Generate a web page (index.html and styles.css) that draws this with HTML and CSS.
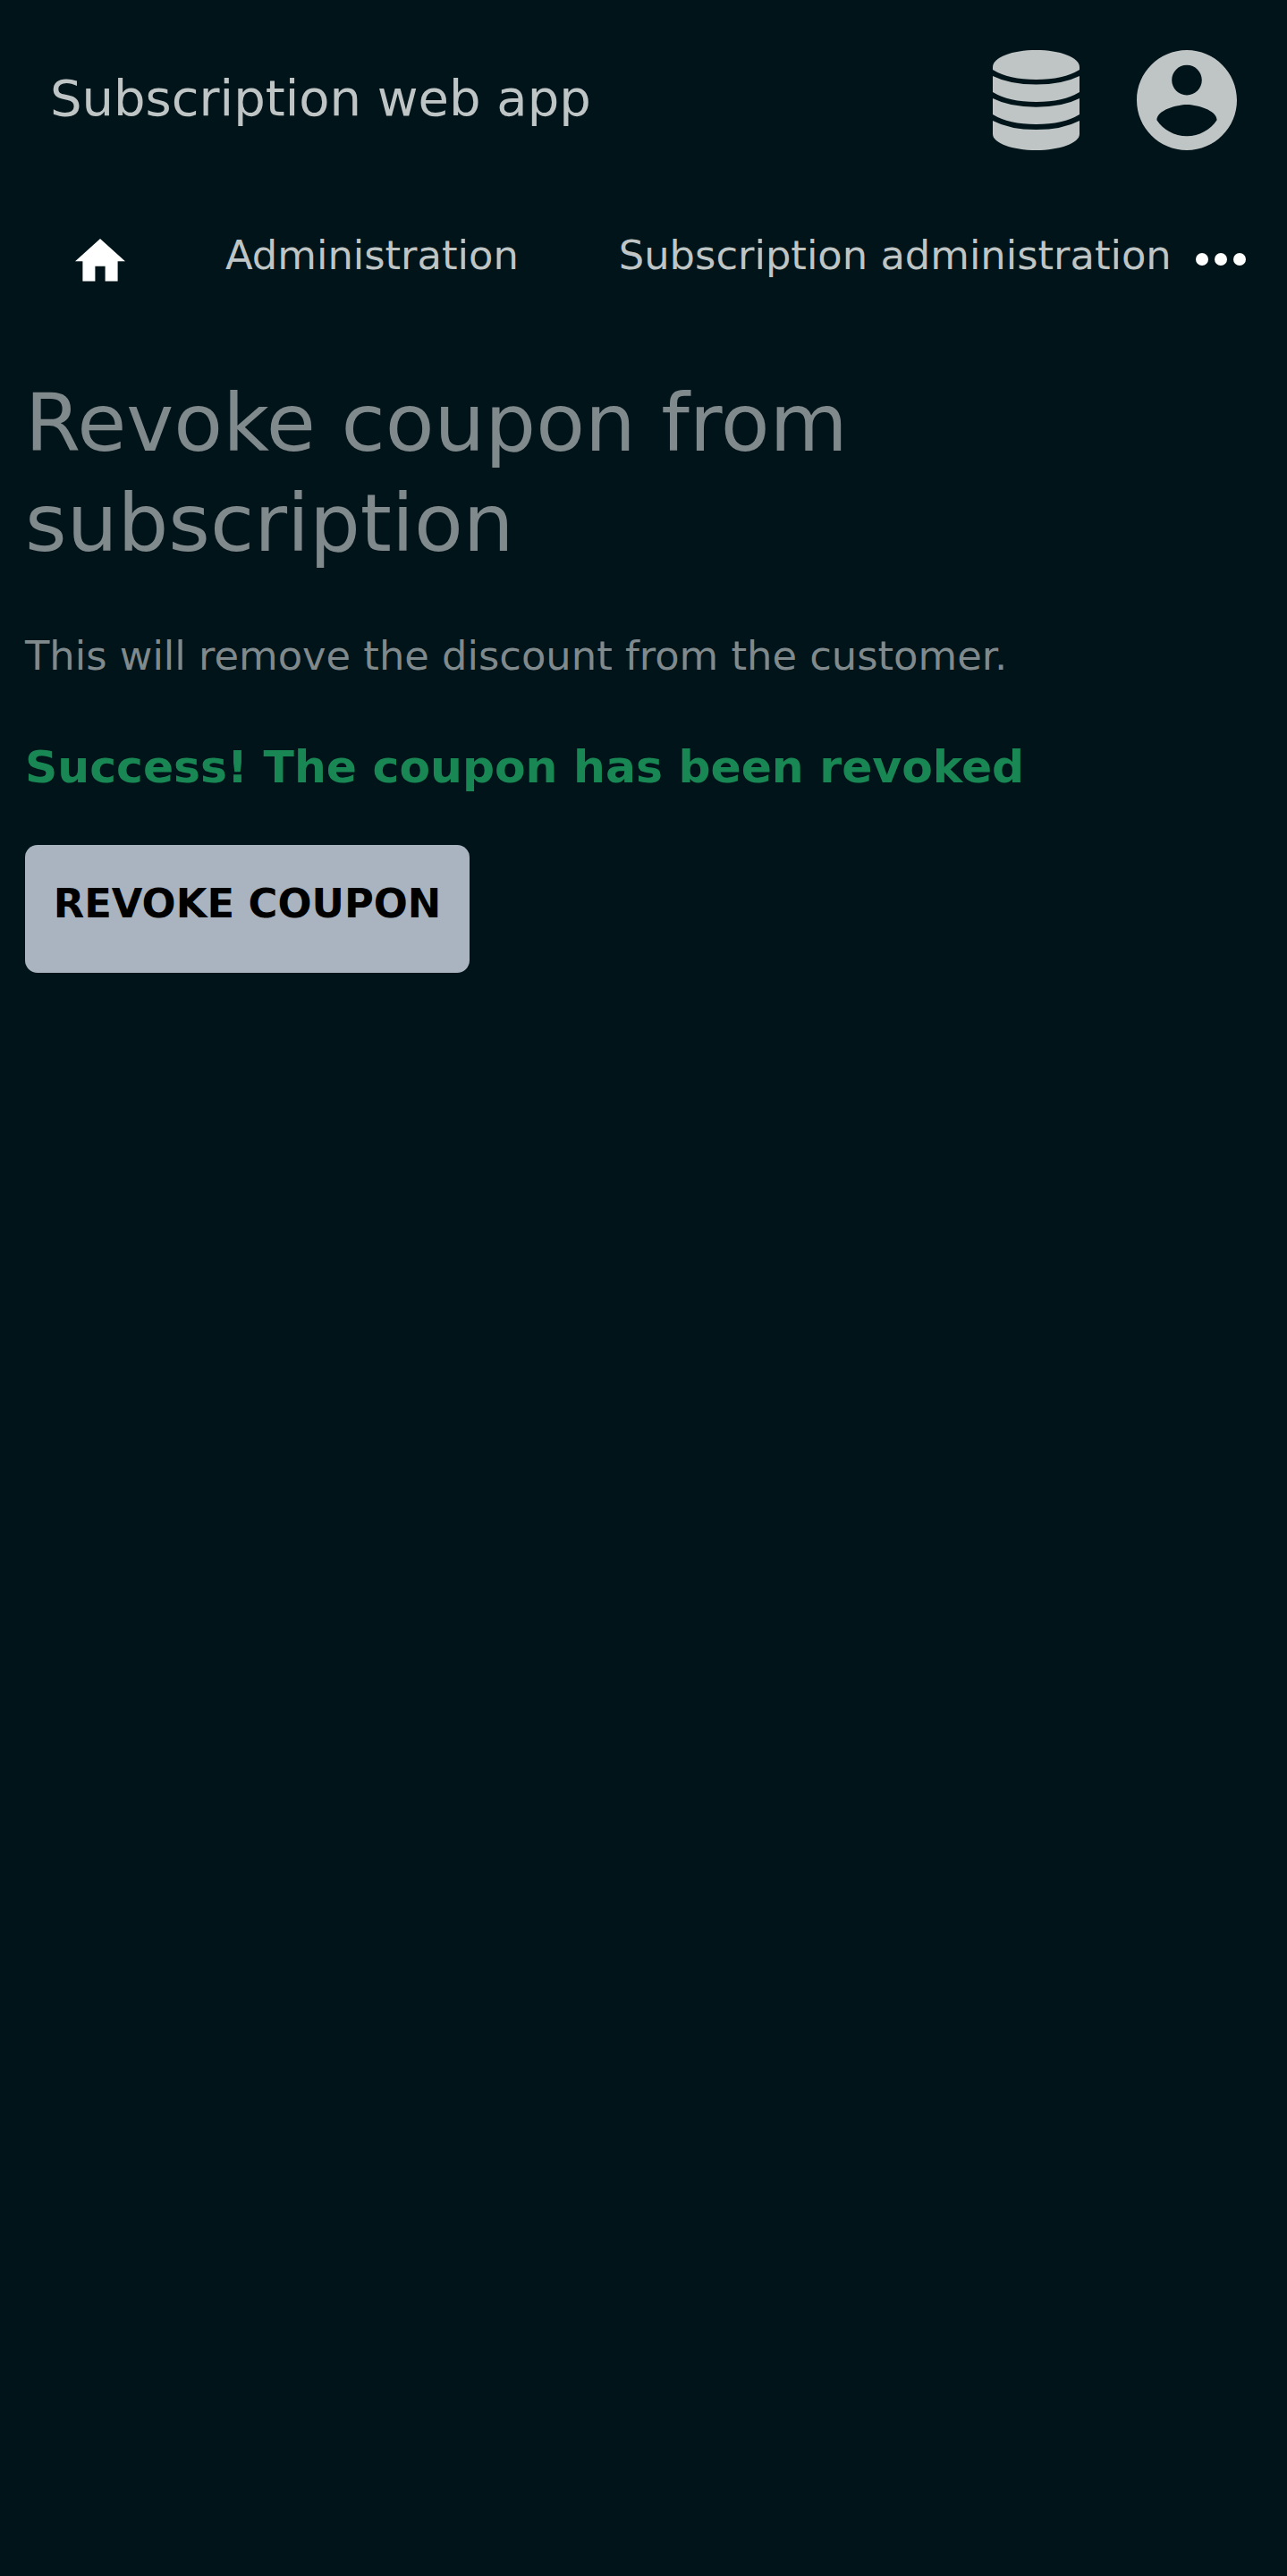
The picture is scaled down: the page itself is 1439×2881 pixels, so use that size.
FILE: index.html
```html
<!DOCTYPE html>
<html lang="en">
<head>
<meta charset="utf-8">
<title>Subscription web app</title>
<link rel="stylesheet" href="styles.css">
</head>
<body>
<header class="topbar">
  <span class="brand">Subscription web app</span>
  <div class="actions">
    <svg class="icon-db" viewBox="0 0 97 112" aria-hidden="true">
      <path d="M0 19C0 8 22 0 48.500 0S97 8 97 19V22Q79 33 48.500 33T0 22Z"/>
      <path d="M0 29Q19 38.500 48.500 38.500T97 29V47Q79 58 48.500 58T0 47Z"/>
      <path d="M0 54Q19 63.700 48.500 63.700T97 54V72Q79 83 48.500 83T0 72Z"/>
      <path d="M0 79Q19 89 48.500 89T97 79V94C97 104 75 112 48.500 112S0 104 0 94Z"/>
    </svg>
    <svg class="icon-user" viewBox="2 2 20 20" aria-hidden="true">
      <path d="M12 2C6.480 2 2 6.480 2 12s4.480 10 10 10 10-4.480 10-10S17.520 2 12 2zm0 3c1.660 0 3 1.340 3 3s-1.340 3-3 3-3-1.340-3-3 1.340-3 3-3zm0 14.200c-2.500 0-4.710-1.280-6-3.220.03-1.990 4-3.080 6-3.080 1.990 0 5.970 1.090 6 3.080-1.290 1.940-3.500 3.220-6 3.220z"/>
    </svg>
  </div>
</header>
<nav class="nav">
  <svg class="icon-home" viewBox="2 3 20 17" aria-hidden="true"><path d="M10 20v-6h4v6h5v-8h3L12 3 2 12h3v8z"/></svg>
  <a class="nav-link">Administration</a>
  <a class="nav-link">Subscription administration</a>
  <svg class="icon-more" viewBox="4 10 16 4" aria-hidden="true"><circle cx="6" cy="12" r="2"/><circle cx="12" cy="12" r="2"/><circle cx="18" cy="12" r="2"/></svg>
</nav>
<main class="content">
  <h1 class="title">Revoke coupon from subscription</h1>
  <p class="lead">This will remove the discount from the customer.</p>
  <p class="success">Success! The coupon has been revoked</p>
  <button class="button" type="button">REVOKE COUPON</button>
</main>
</body>
</html>
```
FILE: styles.css
```css
* { box-sizing: border-box; }
body {
  margin: 0;
  min-height: 2881px;
  background: #001419;
  color: #80898c;
  font-family: "DejaVu Sans", sans-serif;
  font-size: 44.8px;
}
svg { display: block; flex: none; }
.topbar {
  display: flex;
  align-items: center;
  justify-content: space-between;
  height: 224px;
  padding: 0 56px;
  color: #bfc4c5;
}
.brand { padding-bottom: 5px; font-size: 56px; line-height: 84px; white-space: nowrap; }
.actions { display: flex; gap: 64px; fill: #bfc4c5; }
.icon-db { width: 97px; height: 112px; }
.icon-user { width: 112px; height: 112px; }
.nav {
  display: flex;
  height: 126px;
  padding-left: 84px;
  gap: 112px;
  color: #bfc4c5;
  fill: #fff;
}
.nav-link { padding-top: 28px; line-height: 68px; white-space: nowrap; }
.icon-home { width: 56px; height: 47.6px; margin-top: 43px; }
.icon-more { width: 56px; height: 14px; margin-top: 59px; margin-left: -85px; }
.content { padding: 67px 28px 0; }
.title {
  max-width: 1100px;
  margin: 0 0 59px;
  font-size: 89.6px;
  font-weight: 400;
  line-height: 112px;
}
.lead { margin: 0 0 53px; line-height: 68px; }
.success {
  margin: 0 0 50px;
  color: #198754;
  font-size: 50.4px;
  font-weight: 700;
  line-height: 74px;
}
.button {
  display: block;
  width: 497px;
  height: 143px;
  padding: 0 0 13px;
  border: 0;
  border-radius: 14px;
  background: #a9b4c0;
  color: #000;
  font: 700 44.8px "DejaVu Sans", sans-serif;
}
```
